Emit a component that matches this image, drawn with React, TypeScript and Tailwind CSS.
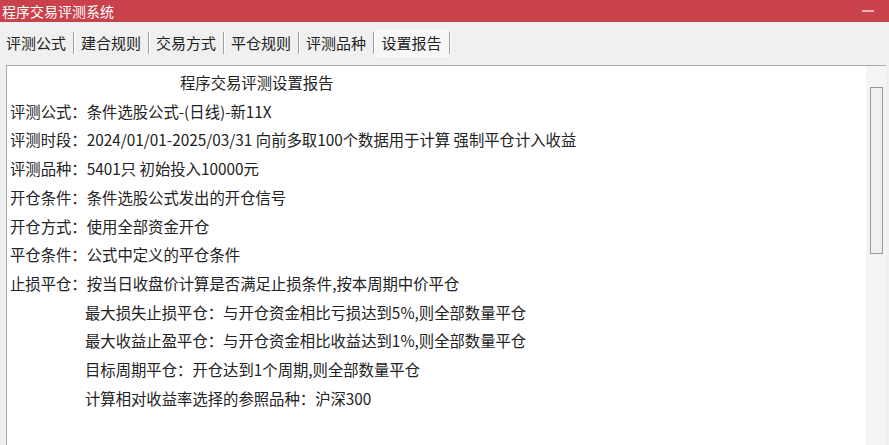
const tabs = ["评测公式", "建合规则", "交易方式", "平仓规则", "评测品种", "设置报告"]

const lines: { text: string; indent?: boolean }[] = [
  { text: "评测公式：条件选股公式-(日线)-新11X" },
  { text: "评测时段：2024/01/01-2025/03/31 向前多取100个数据用于计算 强制平仓计入收益" },
  { text: "评测品种：5401只 初始投入10000元" },
  { text: "开仓条件：条件选股公式发出的开仓信号" },
  { text: "开仓方式：使用全部资金开仓" },
  { text: "平仓条件：公式中定义的平仓条件" },
  { text: "止损平仓：按当日收盘价计算是否满足止损条件,按本周期中价平仓" },
  { text: "最大损失止损平仓：与开仓资金相比亏损达到5%,则全部数量平仓", indent: true },
  { text: "最大收益止盈平仓：与开仓资金相比收益达到1%,则全部数量平仓", indent: true },
  { text: "目标周期平仓：开仓达到1个周期,则全部数量平仓", indent: true },
  { text: "计算相对收益率选择的参照品种：沪深300", indent: true },
]

export default function App() {
  return (
    <div
      className="flex h-[445px] w-[889px] flex-col overflow-hidden bg-[#f0f0f0] text-[#222]"
      style={{ fontFamily: '"Noto Sans CJK SC", "Noto Sans", sans-serif' }}
    >
      <div className="flex h-[22px] shrink-0 items-center justify-between bg-[#c9414a] pl-[2px] text-[14px] text-white">
        <span className="leading-none">程序交易评测系统</span>
        <div className="mr-[15px] h-[2px] w-[12px] bg-[#f2b3b6]" />
      </div>

      <div className="h-[3px] shrink-0 bg-[#eef1f3]" />

      <div className="flex h-[40px] shrink-0 items-start pl-[6px] pt-[4px] text-[15px]">
        {tabs.map((tab, i) => (
          <div key={tab} className="flex items-center">
            <div
              className={
                i === tabs.length - 1
                  ? "flex h-[28px] items-center bg-[#f7f7f7] px-[7px]"
                  : "flex h-[28px] items-center pr-[6.5px] " + (i === 0 ? "pl-0" : "pl-[6.5px]")
              }
            >
              {tab}
            </div>
            <div className="h-[22px] w-[2px] border-l border-[#a0a0a0] border-r border-r-white" />
          </div>
        ))}
      </div>

      <div className="ml-[6px] mr-[3px] flex min-h-0 flex-1 border-l border-t border-[#a9a9a9] bg-white">
        <div className="flex-1 pl-[3px] pt-[2px] text-[15.35px] leading-[28.7px]">
          <div className="pl-[170px]">程序交易评测设置报告</div>
          {lines.map((l) => (
            <div key={l.text} className={l.indent ? "pl-[75px]" : ""}>
              {l.text}
            </div>
          ))}
        </div>
        <div className="flex w-[20px] shrink-0 flex-col items-center bg-[#f4f4f4] pt-[21px]">
          <div className="h-[167px] w-[13px] border border-[#9a9a9a] bg-[#f0f0f0]" />
        </div>
      </div>
    </div>
  )
}
